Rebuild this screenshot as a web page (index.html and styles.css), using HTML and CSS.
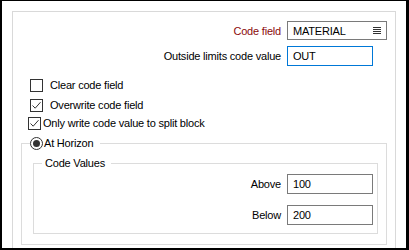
FILE: index.html
```html
<!DOCTYPE html>
<html>
<head>
<meta charset="utf-8">
<link rel="stylesheet" href="styles.css">
</head>
<body>
<div class="window">
  <div class="panel">
    <div class="form">
      <label class="lbl lbl-req">Code field</label>
      <div class="field field-select">
        <span>MATERIAL</span>
        <svg class="list-icon" width="8" height="8" viewBox="0 0 8 8"><path d="M0 0.5H8M0 2.5H8M0 4.5H8M0 6.5H8" stroke="#333" stroke-width="1"/></svg>
      </div>
      <label class="lbl">Outside limits code value</label>
      <div class="field field-short field-focus">OUT</div>
    </div>

    <div class="checks">
      <div class="check check-clear">
        <span class="box"></span><span>Clear code field</span>
      </div>
      <div class="check check-over">
        <span class="box"><svg width="11" height="11" viewBox="0 0 11 11"><path d="M1.5 5.5L4.2 8.2L9.5 2.2" fill="none" stroke="#333" stroke-width="1"/></svg></span><span>Overwrite code field</span>
      </div>
      <div class="check check-only">
        <span class="box"><svg width="11" height="11" viewBox="0 0 11 11"><path d="M1.5 5.5L4.2 8.2L9.5 2.2" fill="none" stroke="#333" stroke-width="1"/></svg></span><span>Only write code value to split block</span>
      </div>
    </div>

    <fieldset class="group">
      <legend class="group-legend"><span class="radio"><span class="dot"></span></span>At Horizon</legend>
      <fieldset class="subgroup">
        <legend class="sub-legend">Code Values</legend>
        <div class="form form-sub">
          <label class="lbl">Above</label>
          <div class="field">100</div>
          <label class="lbl">Below</label>
          <div class="field">200</div>
        </div>
      </fieldset>
    </fieldset>
  </div>
</div>
</body>
</html>
```

FILE: styles.css
```css
html, body {
  margin: 0;
  padding: 0;
  background: #ffffff;
}

body {
  font-family: "Liberation Sans", Arial, sans-serif;
  font-size: 11px;
  letter-spacing: -0.2px;
  color: #000000;
}

.window {
  width: 409px;
  height: 250px;
  box-sizing: border-box;
  border-left: 2px solid #000;
  border-top: 1px solid #000;
  border-right: 3px solid #000;
  border-bottom: 2px solid #000;
  padding: 10px 10px 0 10px;
  display: flex;
  flex-direction: column;
  overflow: hidden;
  background: #fff;
}

.panel {
  flex: 1;
  border: 1px solid #d9d9d9;
  border-bottom: none;
  display: flex;
  flex-direction: column;
}

.form {
  display: grid;
  grid-template-columns: 1fr 100px;
  column-gap: 6px;
  row-gap: 6px;
  align-items: center;
  padding: 9px 8px 0 0;
}

.lbl {
  justify-self: end;
  line-height: 14px;
}

.lbl-req {
  color: #8b0a0a;
}

.field {
  box-sizing: border-box;
  height: 20px;
  border: 1px solid #7a7a7a;
  padding: 0 5px;
  display: flex;
  align-items: center;
  justify-content: space-between;
  line-height: 14px;
  background: #fff;
}

.field-select {
  height: 19px;
  padding-right: 5px;
}

.list-icon {
  display: block;
}

.field-short {
  width: 86px;
}

.field-focus {
  border-color: #0078d7;
}

.checks {
  display: flex;
  flex-direction: column;
  margin-top: 10px;
}

.check {
  display: flex;
  align-items: center;
  height: 18px;
  line-height: 14px;
}

.check .box {
  box-sizing: border-box;
  width: 13px;
  height: 13px;
  border: 1px solid #333;
  background: #fff;
  display: flex;
  align-items: center;
  justify-content: center;
}

.check .box svg {
  display: block;
}

.check-clear,
.check-over {
  padding-left: 17px;
  gap: 7px;
}

.check-over {
  margin-top: 2px;
}

.check-only {
  padding-left: 15px;
  gap: 2px;
}

.group {
  margin: 4px 8px 0 8px;
  padding: 6px 8px 10px 8px;
  border: 1px solid #dcdcdc;
  min-width: 0;
}

.group-legend {
  padding: 0 7px 0 0;
  display: flex;
  align-items: center;
  gap: 1px;
  height: 14px;
  line-height: 14px;
}

.radio {
  box-sizing: border-box;
  width: 13px;
  height: 13px;
  border: 1px solid #333;
  border-radius: 50%;
  display: flex;
  align-items: center;
  justify-content: center;
  background: #fff;
}

.radio .dot {
  width: 7px;
  height: 7px;
  border-radius: 50%;
  background: #333;
}

.subgroup {
  margin: 0 0 0 3px;
  padding: 4px 4px 8px 8px;
  border: 1px solid #dcdcdc;
  min-width: 0;
}

.sub-legend {
  padding: 0 6px 0 3px;
  line-height: 14px;
}

.form-sub {
  grid-template-columns: 1fr 86px;
  row-gap: 11px;
  padding: 0;
}
```
